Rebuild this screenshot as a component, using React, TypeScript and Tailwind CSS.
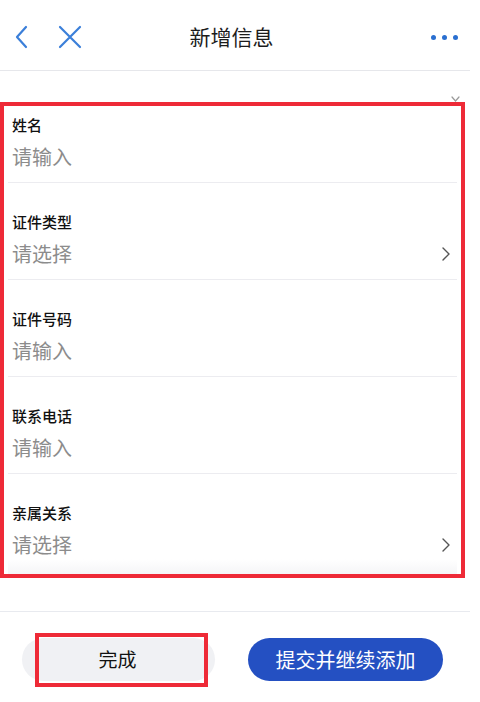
import React from 'react'

const fields = [
  { label: '姓名', placeholder: '请输入', arrow: false },
  { label: '证件类型', placeholder: '请选择', arrow: true },
  { label: '证件号码', placeholder: '请输入', arrow: false },
  { label: '联系电话', placeholder: '请输入', arrow: false },
  { label: '亲属关系', placeholder: '请选择', arrow: true },
]

const Chevron = () => (
  <svg width="10" height="16" viewBox="0 0 10 16" fill="none">
    <path d="M2 2l6 6-6 6" stroke="#555" strokeWidth="1.4" strokeLinecap="round" strokeLinejoin="round" />
  </svg>
)

export default function App() {
  return (
    <div
      className="w-[480px] h-[702px] bg-white overflow-hidden"
      style={{ fontFamily: '"Noto Sans CJK SC", "Noto Sans", sans-serif' }}
    >
      <div className="w-[470px]">
        {/* header */}
        <div className="h-[71px] pt-[4px] flex items-center border-b border-[#e6e7eb]">
          <div className="flex items-center gap-[30px] pl-[14px]">
            <svg width="14" height="24" viewBox="0 0 14 24" fill="none">
              <path d="M12 2L3 12l9 10" stroke="#3b7fd9" strokeWidth="2.2" strokeLinecap="round" strokeLinejoin="round" />
            </svg>
            <svg width="24" height="24" viewBox="0 0 24 24" fill="none">
              <path d="M2 2l20 20M22 2L2 22" stroke="#3b7fd9" strokeWidth="2.2" strokeLinecap="round" />
            </svg>
          </div>
          <div className="flex-1 text-center text-[21px] text-[#1c1c1c] pr-[50px]">新增信息</div>
          <div className="flex gap-[6px] pr-[12px]">
            <span className="w-[5px] h-[5px] rounded-full bg-[#2a6fd0]" />
            <span className="w-[5px] h-[5px] rounded-full bg-[#2a6fd0]" />
            <span className="w-[5px] h-[5px] rounded-full bg-[#2a6fd0]" />
          </div>
        </div>

        <div className="h-[31px] flex justify-end items-end pr-[10px]">
          <svg width="9" height="6" viewBox="0 0 9 6" fill="none">
            <path d="M1 1l3.5 4L8 1" stroke="#9a9a9a" strokeWidth="1.2" strokeLinecap="round" />
          </svg>
        </div>

        {/* form, with red annotation outline */}
        <div className="w-[465px] border-4 border-[#ee2a37] bg-white">
          {fields.map((f, i) => (
            <div
              key={f.label}
              className={`mx-[4px] pl-[4px] pr-[6px] ${i === 0 ? 'pt-[9px]' : 'pt-[29px]'} ${i < fields.length - 1 ? 'pb-[12px] border-b border-[#ececf0]' : 'pb-[16px] bg-gradient-to-b from-white from-85% to-[#f5f5f7]'}`}
            >
              <div className="text-[15px] leading-[20px] font-medium text-[#111]">{f.label}</div>
              <div className="mt-[9px] flex items-center justify-between">
                <span className="text-[20px] leading-[26px] text-[#8c8c8c]">{f.placeholder}</span>
                {f.arrow && <Chevron />}
              </div>
            </div>
          ))}
        </div>

        <div className="mt-[33px] border-t border-[#e8eaef]" />

        {/* buttons */}
        <div className="flex items-center pt-[26px] pl-[22px] gap-[33px]">
          <div className="relative w-[193px] h-[43px] rounded-full bg-[#f0f1f4] flex items-center justify-center">
            <span className="text-[19px] text-[#111] pr-[2px]">完成</span>
            <div className="absolute left-[13px] top-[-5px] w-[173px] h-[54px] border-[4px] border-[#ee2a37]" />
          </div>
          <div className="w-[195px] h-[43px] rounded-full bg-[#2450c2] flex items-center justify-center text-white text-[20px]">
            提交并继续添加
          </div>
        </div>
      </div>
    </div>
  )
}
